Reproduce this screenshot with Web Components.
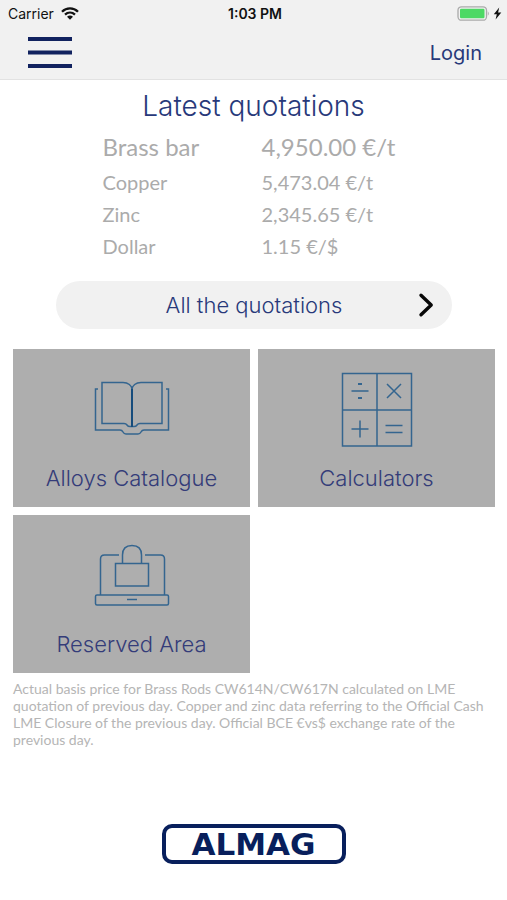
<!DOCTYPE html>
<html lang="en">
<head>
<meta charset="utf-8">
<meta name="viewport" content="width=device-width, initial-scale=1">
<title>Almag</title>
<style>
  html, body { margin: 0; min-height: 100%; background: #fff; }
  body { font-family: Inter, "Liberation Sans", sans-serif; --navy: #28397a; --grey: #ababab; --bar: #f1f1f1; }
</style>
</head>
<body>
<almag-app></almag-app>
<script>
function define(name, html) {
  const template = document.createElement('template');
  template.innerHTML = html;
  customElements.define(name, class extends HTMLElement {
    constructor() {
      super();
      this.attachShadow({ mode: 'open' }).append(template.content.cloneNode(true));
    }
  });
}

define('status-bar', `
<style>
  :host { display: grid; grid-template-columns: 1fr auto 1fr; align-items: center; height: 26px; padding: 0 5px 0 8px; color: #111; font-size: 14px; }
  .left, .right { display: flex; align-items: center; gap: 7px; }
  .right { justify-content: flex-end; gap: 3px; }
  .time { font-weight: 600; }
  svg { display: block; }
</style>
<div class="left"><span>Carrier</span>
  <svg width="18" height="13" viewBox="0 0 18 13" fill="none" stroke="#111" stroke-width="2.3" aria-hidden="true">
    <path d="M1 4.7C5.5.2 12.500.2 17 4.700M4 7.700c2.900-2.700 7.100-2.700 10 0"/><path d="M6 9.700c1.900-1.700 4.100-1.700 6 0L9 12.700z" fill="#111" stroke="none"/>
  </svg></div>
<span class="time">1:03 PM</span>
<div class="right">
  <svg width="33" height="15" viewBox="0 0 33 15" aria-hidden="true">
    <rect x="1" y=".8" width="28.500" height="13.400" rx="3.500" fill="none" stroke="#aaa" stroke-width="1.300"/>
    <rect x="3" y="2.800" width="24.500" height="9.400" rx="1.200" fill="#4cd964"/><path d="M30.800 5.200q2 2.300 0 4.600z" fill="#aaa"/>
  </svg>
  <svg width="9" height="13" viewBox="0 0 9 13" aria-hidden="true"><path d="M6.200.5.800 7.300h3L2.600 12.500 8.300 5.400H5.100z" fill="#111"/></svg>
</div>`);

define('nav-bar', `
<style>
  :host { display: flex; justify-content: space-between; align-items: center; height: 53px; padding: 0 25px 0 27px; border-bottom: 1px solid #e2e2e2; }
  button { border: 0; background: none; padding: 0; cursor: pointer; }
  svg { display: block; }
  a { color: var(--navy); font-size: 20px; text-decoration: none; }
</style>
<button type="button" aria-label="Menu"><svg width="46" height="32" viewBox="0 0 46 32"><path d="M1 2h44M1 15.500h44M1 29h44" stroke="#11225f" stroke-width="4"/></svg></button>
<a href="#login">Login</a>`);

define('quotation-list', `
<style>
  :host { display: block; padding: 10px 13px 0; }
  h1 { margin: 0; color: var(--navy); font-size: 28px; line-height: 32px; font-weight: 300; text-align: center; }
  table { margin: 6px auto 0; border-collapse: collapse; color: var(--grey); font: 20px/32px Lato, "Noto Sans", sans-serif; }
  th, td { padding: 0; font-weight: 400; text-align: left; }
  th { width: 159px; }
  td { width: 143px; white-space: nowrap; }
  .main { font-size: 24px; line-height: 38px; }
</style>
<h1>Latest quotations</h1>
<table>
  <tr class="main"><th scope="row">Brass bar</th><td>4,950.00 €/t</td></tr>
  <tr><th scope="row">Copper</th><td>5,473.04 €/t</td></tr>
  <tr><th scope="row">Zinc</th><td>2,345.65 €/t</td></tr>
  <tr><th scope="row">Dollar</th><td>1.15 €/$</td></tr>
</table>`);

define('pill-button', `
<style>
  :host { display: block; margin: 19px 55px 20px 56px; }
  button { display: grid; grid-template-columns: 1fr auto 1fr; align-items: center; width: 100%; height: 48px; padding: 0 17px; border: 0; border-radius: 24px; background: var(--bar); color: var(--navy); font: 300 22px/28px Inter, sans-serif; cursor: pointer; }
  span { grid-column: 2; }
  svg { justify-self: end; display: block; }
</style>
<button type="button"><span><slot></slot></span>
<svg width="17" height="26" viewBox="0 0 17 26" aria-hidden="true"><path d="M3 3.200 13.200 13 3 22.800" fill="none" stroke="#080808" stroke-width="3.400" stroke-linecap="round" stroke-linejoin="round"/></svg></button>`);

define('menu-tile', `
<style>
  :host { display: block; }
  a { display: flex; flex-direction: column; justify-content: flex-end; align-items: center; box-sizing: border-box; height: 158px; padding-bottom: 15px; gap: 14px; background: #aeaeae; color: #343c79; font-size: 22px; line-height: 28px; font-weight: 300; text-decoration: none; }
  ::slotted(svg) { display: block; fill: none; stroke: #34658f; stroke-width: 1.500; }
</style>
<a href="#"><slot name="icon"></slot><span><slot></slot></span></a>`);

define('tile-grid', `
<style>
  :host { display: grid; grid-template-columns: 1fr 1fr; gap: 8px; padding: 0 12px 0 13px; }
</style>
<menu-tile>
  <svg slot="icon" width="76" height="78" viewBox="0 -2 76 78" aria-hidden="true">
    <path d="M4 15H1.500V56H26q2 0 3 2t3 2h12q2 0 3-2t3-2h24.500V15H72"/>
    <path d="M8 8.500h21c5 0 9 3 9 7 0-4 4-7 9-7h21v41H46q-2 0-3 1.500t-3 1.500h-4q-2 0-3-1.500t-3-1.500H8z"/><path d="M38 15v38" stroke-width="2" stroke="#164c7c"/>
  </svg>Alloys Catalogue</menu-tile>
<menu-tile>
  <svg slot="icon" width="72" height="78" viewBox="0 0 72 78" aria-hidden="true">
    <path d="M1.500 1.500h69v72.500h-69zM36 1.500V74M1.500 38h69"/>
    <path d="M10.500 19h17M10.500 57h17M19 48.500v17M46 12l14 14M60 12 46 26M44.500 53.500h17M44.500 60.500h17"/><path d="M17 12h4M17 26h4" stroke-width="2"/>
  </svg>Calculators</menu-tile>
<menu-tile>
  <svg slot="icon" width="76" height="78" viewBox="0 -6 76 78" aria-hidden="true">
    <path d="M6.500 51V15q0-4 4-4H25M51 11h15.500q4 0 4 4V51M28.500 19V11q0-9.500 9.500-9.500t9.500 9.500v8M21.500 19.500h33v22.500h-33z"/>
    <rect x="1.500" y="51" width="73" height="10" rx="1.500"/><path d="M33 55.500h10"/>
  </svg>Reserved Area</menu-tile>`);

define('price-note', `
<style>
  :host { display: block; padding: 7px 12px 0 13px; }
  p { margin: 0; color: #b5b5b5; font: 14px/17px Lato, "Noto Sans", sans-serif; }
</style>
<p><slot></slot></p>`);

define('brand-logo', `
<style>
  :host { display: flex; justify-content: center; padding-top: 76px; }
  div { display: flex; justify-content: center; align-items: center; box-sizing: border-box; width: 184px; height: 40px; border: 4px solid #081f5c; border-radius: 10px; color: #081f5c; font: bold 31px/32px "DejaVu Sans", sans-serif; }
</style>
<div>ALMAG</div>`);

define('almag-app', `
<style>
  :host { display: block; }
  header { background: var(--bar); }
</style>
<header><status-bar></status-bar><nav-bar></nav-bar></header>
<main>
  <quotation-list></quotation-list>
  <pill-button>All the quotations</pill-button>
  <tile-grid></tile-grid>
  <price-note>Actual basis price for Brass Rods CW614N/CW617N calculated on LME quotation of previous day. Copper and zinc data referring to the Official Cash LME Closure of the previous day. Official BCE €vs$ exchange rate of the previous day.</price-note>
</main>
<footer><brand-logo></brand-logo></footer>`);
</script>
</body>
</html>
